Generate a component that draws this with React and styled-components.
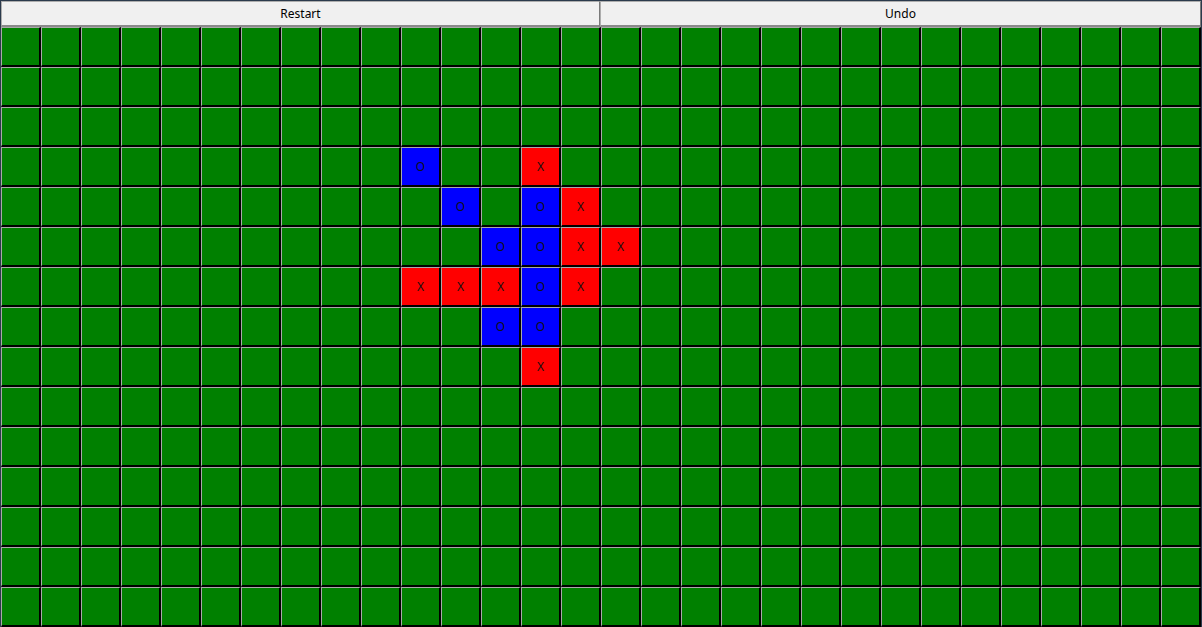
import React, { useState } from "react";
import styled, { createGlobalStyle } from "styled-components";

const COLS = 30;
const ROWS = 15;

const start = {
  "3-10": "O",
  "3-13": "X",
  "4-11": "O",
  "4-13": "O",
  "4-14": "X",
  "5-12": "O",
  "5-13": "O",
  "5-14": "X",
  "5-15": "X",
  "6-10": "X",
  "6-11": "X",
  "6-12": "X",
  "6-13": "O",
  "6-14": "X",
  "7-12": "O",
  "7-13": "O",
  "8-13": "X",
};

const Global = createGlobalStyle`
  html, body {
    margin: 0;
    padding: 0;
    background: #ffffff;
    overflow: hidden;
  }
`;

const Window = styled.div`
  width: 1202px;
  height: 627px;
  box-sizing: border-box;
  border: 1px solid #2b3a4c;
  border-bottom: none;
  display: flex;
  flex-direction: column;
  overflow: hidden;
  font-family: "Segoe UI", "Noto Sans", "Liberation Sans", sans-serif;
`;

const Toolbar = styled.div`
  display: grid;
  grid-template-columns: 599px 601px;
  height: 26px;
  flex-shrink: 0;
`;

const ToolButton = styled.button`
  box-sizing: border-box;
  margin: 0;
  height: 26px;
  background: #f0f0f0;
  border: 1px solid #adadad;
  border-right-color: #7a7a7a;
  border-bottom: 2px solid #8a8a8a;
  font-family: inherit;
  font-size: 12px;
  color: #000;
  padding: 0;
  cursor: pointer;
`;

const Board = styled.div`
  display: grid;
  grid-template-columns: repeat(${COLS}, 40px);
  grid-auto-rows: 40px;
`;

const fills = { X: "#ff0000", O: "#0000ff" };

const Cell = styled.button`
  box-sizing: border-box;
  width: 40px;
  height: 40px;
  margin: 0;
  padding: 0 0 1px 0;
  background: ${(p) => fills[p.$mark] || "#008000"};
  border-top: 1px solid #a9a9a9;
  border-left: 1px solid #a9a9a9;
  border-right: 2px solid #000;
  border-bottom: 2px solid #000;
  font-family: "Noto Sans", "Liberation Sans", sans-serif;
  font-size: 12px;
  color: #111;
  cursor: pointer;
`;

export default function App() {
  const [marks, setMarks] = useState(start);
  const [history, setHistory] = useState([]);

  const play = (key) => {
    if (marks[key]) return;
    const count = Object.keys(marks).length;
    setHistory([...history, marks]);
    setMarks({ ...marks, [key]: count % 2 ? "O" : "X" });
  };

  const undo = () => {
    if (!history.length) return;
    setMarks(history[history.length - 1]);
    setHistory(history.slice(0, -1));
  };

  const cells = [];
  for (let r = 0; r < ROWS; r++) {
    for (let c = 0; c < COLS; c++) {
      const key = `${r}-${c}`;
      cells.push(
        <Cell key={key} $mark={marks[key]} onClick={() => play(key)}>
          {marks[key] || ""}
        </Cell>
      );
    }
  }

  return (
    <>
      <Global />
      <Window>
        <Toolbar>
          <ToolButton
            onClick={() => {
              setMarks({});
              setHistory([]);
            }}
          >
            Restart
          </ToolButton>
          <ToolButton onClick={undo}>Undo</ToolButton>
        </Toolbar>
        <Board>{cells}</Board>
      </Window>
    </>
  );
}
